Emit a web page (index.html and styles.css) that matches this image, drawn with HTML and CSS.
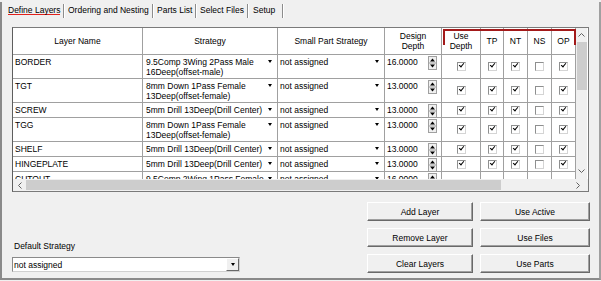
FILE: index.html
```html
<!DOCTYPE html>
<html lang="en">
<head>
    <meta charset="UTF-8">
    <title>Define Layers</title>
    <link rel="stylesheet" href="styles.css">
</head>
<body>
<div class="window">
    <div class="tabs">
        <div class="tab first"><span class="active">Define Layers</span></div>
        <div class="tab w-order">Ordering and Nesting</div>
        <div class="tab w-parts">Parts List</div>
        <div class="tab w-files">Select Files</div>
        <div class="tab w-setup">Setup</div>
    </div>

    <div class="panel">
        <div class="grid-box">
            <div class="grid-top">
                <div class="grid-view">
                    <div class="row head">
                        <div class="c w-name">Layer Name</div>
                        <div class="c w-strat">Strategy</div>
                        <div class="c w-small">Small Part Strategy</div>
                        <div class="c w-depth">Design<br>Depth</div>
                        <div class="c w-use">Use<br>Depth</div>
                        <div class="c w-tp">TP</div>
                        <div class="c w-chk">NT</div>
                        <div class="c w-chk">NS</div>
                        <div class="c w-chk">OP</div>
                    </div>

                    <div class="row tall">
                        <div class="c w-name">BORDER</div>
                        <div class="c w-strat drop"><span>9.5Comp 3Wing 2Pass Male<br>16Deep(offset-male)</span><i class="dd"></i></div>
                        <div class="c w-small drop"><span>not assigned</span><i class="dd"></i></div>
                        <div class="c w-depth num"><span>16.0000</span><svg class="spin" width="9" height="14" viewBox="0 0 9 14"><rect x="0.5" y="0.5" width="8" height="13" fill="#f0f0f0" stroke="#a0a0a0"/><line x1="1" y1="7" x2="8" y2="7" stroke="#a0a0a0"/><path d="M2 5.5L4.5 2.5L7 5.5Z"/><path d="M2 8.5L4.5 11.5L7 8.5Z"/></svg></div>
                        <div class="c w-use box"><i class="cb on"></i></div>
                        <div class="c w-tp box"><i class="cb on"></i></div>
                        <div class="c w-chk box"><i class="cb on"></i></div>
                        <div class="c w-chk box"><i class="cb"></i></div>
                        <div class="c w-chk box"><i class="cb on"></i></div>
                    </div>

                    <div class="row tall">
                        <div class="c w-name">TGT</div>
                        <div class="c w-strat drop"><span>8mm Down 1Pass Female<br>13Deep(offset-female)</span><i class="dd"></i></div>
                        <div class="c w-small drop"><span>not assigned</span><i class="dd"></i></div>
                        <div class="c w-depth num"><span>13.0000</span><svg class="spin" width="9" height="14" viewBox="0 0 9 14"><rect x="0.5" y="0.5" width="8" height="13" fill="#f0f0f0" stroke="#a0a0a0"/><line x1="1" y1="7" x2="8" y2="7" stroke="#a0a0a0"/><path d="M2 5.5L4.5 2.5L7 5.5Z"/><path d="M2 8.5L4.5 11.5L7 8.5Z"/></svg></div>
                        <div class="c w-use box"><i class="cb on"></i></div>
                        <div class="c w-tp box"><i class="cb on"></i></div>
                        <div class="c w-chk box"><i class="cb on"></i></div>
                        <div class="c w-chk box"><i class="cb"></i></div>
                        <div class="c w-chk box"><i class="cb on"></i></div>
                    </div>

                    <div class="row">
                        <div class="c w-name">SCREW</div>
                        <div class="c w-strat drop"><span>5mm Drill 13Deep(Drill Center)</span><i class="dd"></i></div>
                        <div class="c w-small drop"><span>not assigned</span><i class="dd"></i></div>
                        <div class="c w-depth num"><span>13.0000</span><svg class="spin" width="9" height="14" viewBox="0 0 9 14"><rect x="0.5" y="0.5" width="8" height="13" fill="#f0f0f0" stroke="#a0a0a0"/><line x1="1" y1="7" x2="8" y2="7" stroke="#a0a0a0"/><path d="M2 5.5L4.5 2.5L7 5.5Z"/><path d="M2 8.5L4.5 11.5L7 8.5Z"/></svg></div>
                        <div class="c w-use box"><i class="cb on"></i></div>
                        <div class="c w-tp box"><i class="cb on"></i></div>
                        <div class="c w-chk box"><i class="cb on"></i></div>
                        <div class="c w-chk box"><i class="cb"></i></div>
                        <div class="c w-chk box"><i class="cb on"></i></div>
                    </div>

                    <div class="row tall">
                        <div class="c w-name">TGG</div>
                        <div class="c w-strat drop"><span>8mm Down 1Pass Female<br>13Deep(offset-female)</span><i class="dd"></i></div>
                        <div class="c w-small drop"><span>not assigned</span><i class="dd"></i></div>
                        <div class="c w-depth num"><span>13.0000</span><svg class="spin" width="9" height="14" viewBox="0 0 9 14"><rect x="0.5" y="0.5" width="8" height="13" fill="#f0f0f0" stroke="#a0a0a0"/><line x1="1" y1="7" x2="8" y2="7" stroke="#a0a0a0"/><path d="M2 5.5L4.5 2.5L7 5.5Z"/><path d="M2 8.5L4.5 11.5L7 8.5Z"/></svg></div>
                        <div class="c w-use box"><i class="cb on"></i></div>
                        <div class="c w-tp box"><i class="cb on"></i></div>
                        <div class="c w-chk box"><i class="cb on"></i></div>
                        <div class="c w-chk box"><i class="cb"></i></div>
                        <div class="c w-chk box"><i class="cb on"></i></div>
                    </div>

                    <div class="row">
                        <div class="c w-name">SHELF</div>
                        <div class="c w-strat drop"><span>5mm Drill 13Deep(Drill Center)</span><i class="dd"></i></div>
                        <div class="c w-small drop"><span>not assigned</span><i class="dd"></i></div>
                        <div class="c w-depth num"><span>13.0000</span><svg class="spin" width="9" height="14" viewBox="0 0 9 14"><rect x="0.5" y="0.5" width="8" height="13" fill="#f0f0f0" stroke="#a0a0a0"/><line x1="1" y1="7" x2="8" y2="7" stroke="#a0a0a0"/><path d="M2 5.5L4.5 2.5L7 5.5Z"/><path d="M2 8.5L4.5 11.5L7 8.5Z"/></svg></div>
                        <div class="c w-use box"><i class="cb on"></i></div>
                        <div class="c w-tp box"><i class="cb on"></i></div>
                        <div class="c w-chk box"><i class="cb on"></i></div>
                        <div class="c w-chk box"><i class="cb"></i></div>
                        <div class="c w-chk box"><i class="cb on"></i></div>
                    </div>

                    <div class="row">
                        <div class="c w-name">HINGEPLATE</div>
                        <div class="c w-strat drop"><span>5mm Drill 13Deep(Drill Center)</span><i class="dd"></i></div>
                        <div class="c w-small drop"><span>not assigned</span><i class="dd"></i></div>
                        <div class="c w-depth num"><span>13.0000</span><svg class="spin" width="9" height="14" viewBox="0 0 9 14"><rect x="0.5" y="0.5" width="8" height="13" fill="#f0f0f0" stroke="#a0a0a0"/><line x1="1" y1="7" x2="8" y2="7" stroke="#a0a0a0"/><path d="M2 5.5L4.5 2.5L7 5.5Z"/><path d="M2 8.5L4.5 11.5L7 8.5Z"/></svg></div>
                        <div class="c w-use box"><i class="cb on"></i></div>
                        <div class="c w-tp box"><i class="cb on"></i></div>
                        <div class="c w-chk box"><i class="cb on"></i></div>
                        <div class="c w-chk box"><i class="cb"></i></div>
                        <div class="c w-chk box"><i class="cb on"></i></div>
                    </div>

                    <div class="row tall">
                        <div class="c w-name">CUTOUT</div>
                        <div class="c w-strat drop"><span>9.5Comp 2Wing 1Pass Female<br>16Deep(offset-female)</span><i class="dd"></i></div>
                        <div class="c w-small drop"><span>not assigned</span><i class="dd"></i></div>
                        <div class="c w-depth num"><span>16.0000</span><svg class="spin" width="9" height="14" viewBox="0 0 9 14"><rect x="0.5" y="0.5" width="8" height="13" fill="#f0f0f0" stroke="#a0a0a0"/><line x1="1" y1="7" x2="8" y2="7" stroke="#a0a0a0"/><path d="M2 5.5L4.5 2.5L7 5.5Z"/><path d="M2 8.5L4.5 11.5L7 8.5Z"/></svg></div>
                        <div class="c w-use box"><i class="cb on"></i></div>
                        <div class="c w-tp box"><i class="cb on"></i></div>
                        <div class="c w-chk box"><i class="cb on"></i></div>
                        <div class="c w-chk box"><i class="cb"></i></div>
                        <div class="c w-chk box"><i class="cb on"></i></div>
                    </div>
                </div>

                <div class="vscroll">
                    <svg class="arrow" width="7" height="4" viewBox="0 0 7 4"><polyline points="0.5,3.5 3.5,0.5 6.5,3.5" fill="none" stroke="#606060"/></svg>
                    <div class="vthumb"></div>
                    <svg class="arrow down" width="7" height="4" viewBox="0 0 7 4"><polyline points="0.5,0.5 3.5,3.5 6.5,0.5" fill="none" stroke="#606060"/></svg>
                </div>
            </div>
            <div class="hscroll">
                <span class="harrow"><svg width="4" height="7" viewBox="0 0 4 7"><polyline points="3.5,0.5 0.5,3.5 3.5,6.5" fill="none" stroke="#606060"/></svg></span>
                <div class="hthumb"></div>
                <span class="harrow right"><svg width="4" height="7" viewBox="0 0 4 7"><polyline points="0.5,0.5 3.5,3.5 0.5,6.5" fill="none" stroke="#606060"/></svg></span>
            </div>
            <div class="mark"></div>
        </div>

        <div class="footer">
            <div class="default">
                <div class="label">Default Strategy</div>
                <div class="select">
                    <span>not assigned</span>
                    <span class="select-btn"><i class="dd"></i></span>
                </div>
            </div>
            <div class="btns">
                <button class="btn">Add Layer</button>
                <button class="btn">Use Active</button>
                <button class="btn">Remove Layer</button>
                <button class="btn">Use Files</button>
                <button class="btn">Clear Layers</button>
                <button class="btn">Use Parts</button>
            </div>
        </div>
    </div>
</div>
</body>
</html>
```

FILE: styles.css
```css
body {
    margin: 0;
    background: #f0f0f0;
    font-family: "Liberation Sans", Arial, sans-serif;
    font-size: 8.5px;
    line-height: 10px;
    color: #000;
}
.window {
    box-sizing: border-box;
    margin-top: 2px;
    height: 278px;
    border: 2px solid #a0a0a0;
    border-top: none;
    border-left-color: #8a8a8a;
    border-bottom-color: #8a8a8a;
}

/* tab strip */
.tabs {
    display: flex;
    height: 16px;
}
.tab {
    box-sizing: border-box;
    margin-top: 2px;
    height: 14px;
    padding: 1px 0 0 4px;
    border-right: 1px solid #8c8c8c;
    box-shadow: 1px 0 0 #fff;
    white-space: nowrap;
}
.tab.first { width: 62px; padding-left: 6px; }
.w-order { width: 89px; }
.w-parts { width: 43px; }
.w-files { width: 52px; }
.w-setup { width: 35px; padding-left: 5px; }
.active {
    display: inline-block;
    border-bottom: 1px solid #e0201c;
    height: 9px;
}

.panel {
    padding: 9px 10px 0 10px;
}

/* grid */
.grid-box {
    position: relative;
    border: 1px solid #7a7a7a;
    border-left-color: #5e5e5e;
    background: #fff;
}
.grid-top {
    display: flex;
    height: 151px;
}
.grid-view {
    width: 563px;
    overflow: hidden;
}
.row {
    display: flex;
    box-sizing: border-box;
    height: 15px;
    border-bottom: 1px solid #a0a0a0;
}
.row.tall { height: 24px; }
.row.head { height: 27px; }
.c {
    box-sizing: border-box;
    flex: none;
    padding: 2px 2px 0;
    border-right: 1px solid #a0a0a0;
    white-space: nowrap;
    overflow: hidden;
}
.head .c {
    display: flex;
    align-items: center;
    justify-content: center;
    text-align: center;
    padding: 0;
}
.w-name { width: 130px; }
.w-strat { width: 135px; padding-left: 3px; }
.w-small { width: 107px; }
.w-depth { width: 57px; }
.w-use { width: 39px; }
.w-tp { width: 23px; }
.w-chk { width: 24px; }

.drop {
    display: flex;
    justify-content: space-between;
    padding-right: 5px;
}
.dd {
    display: block;
    flex: none;
    width: 0;
    height: 0;
    margin-top: 3px;
    border-left: 2.5px solid transparent;
    border-right: 2.5px solid transparent;
    border-top: 3px solid #000;
}
.num {
    display: flex;
    justify-content: space-between;
    padding-right: 4px;
}
.spin {
    flex: none;
    margin-top: -1px;
}
.box {
    display: flex;
    align-items: center;
    justify-content: center;
    padding: 0;
}
.cb {
    position: relative;
    display: block;
    width: 7px;
    height: 7px;
    border: 1px solid #8e8f8f;
    border-right-color: #d4d4d4;
    border-bottom-color: #d4d4d4;
    background: #fff;
}
.cb.on::after {
    content: "";
    position: absolute;
    left: 1px;
    top: 0;
    width: 4px;
    height: 2px;
    border-left: 1.5px solid #000;
    border-bottom: 1.5px solid #000;
    transform: rotate(-50deg);
}

/* scroll bars */
.vscroll {
    display: flex;
    flex-direction: column;
    align-items: center;
    width: 11px;
    background: #f0f0f0;
}
.arrow { margin-top: 5px; }
.arrow.down { margin: auto 0 6px; }
.vthumb {
    width: 10px;
    height: 48px;
    margin-top: 5px;
    background: #cdcdcd;
}
.hscroll {
    display: flex;
    align-items: center;
    height: 12px;
    background: #f0f0f0;
}
.harrow {
    display: flex;
    justify-content: center;
    width: 13px;
}
.harrow.right { margin: 0 4px 0 auto; }
.hthumb {
    width: 475px;
    height: 10px;
    background: #cdcdcd;
}

/* red highlight around the option columns */
.mark {
    position: absolute;
    left: 430px;
    top: 1px;
    box-sizing: border-box;
    width: 133px;
    height: 16px;
    border: 2px solid #a31a1a;
    border-bottom: none;
}

/* bottom area */
.footer {
    display: flex;
    justify-content: space-between;
    margin: 10px -1px 0 0;
}
.default {
    align-self: flex-end;
    width: 228px;
    margin-bottom: 1px;
}
.label {
    padding-left: 2px;
    margin-bottom: 6px;
}
.select {
    box-sizing: border-box;
    display: flex;
    align-items: center;
    justify-content: space-between;
    height: 15px;
    padding-left: 1px;
    border: 1px solid #8a8a8a;
    border-right-color: #d0d0d0;
    border-bottom-color: #d0d0d0;
    background: #fff;
}
.select-btn {
    box-sizing: border-box;
    display: flex;
    align-items: center;
    justify-content: center;
    width: 13px;
    height: 13px;
    background: #f0f0f0;
    border: 1px solid #fff;
    border-right-color: #696969;
    border-bottom-color: #696969;
}
.select-btn .dd { margin-top: 0; }
.btns {
    display: grid;
    grid-template-columns: 106px 110px;
    grid-auto-rows: 19px;
    gap: 7px;
}
.btn {
    font: inherit;
    color: #000;
    background: #f0f0f0;
    border: 1px solid #fff;
    border-right-color: #696969;
    border-bottom-color: #696969;
    box-shadow: inset -1px -1px 0 #a0a0a0;
    padding: 0;
}
```
